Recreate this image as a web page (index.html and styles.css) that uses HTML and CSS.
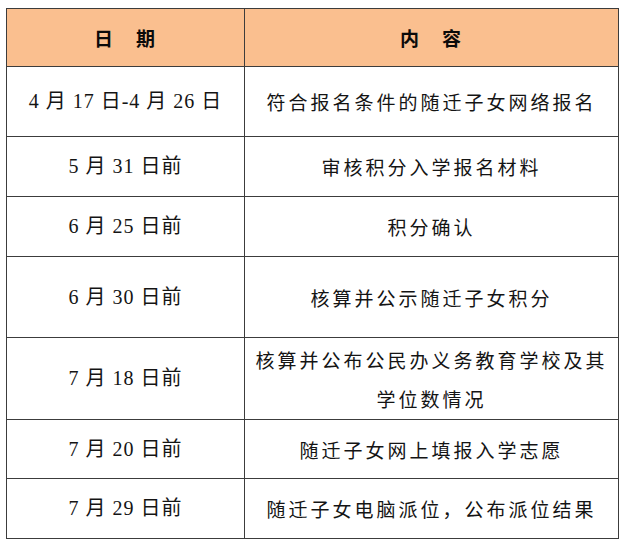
FILE: index.html
```html
<!DOCTYPE html>
<html lang="zh-CN">
<head>
<meta charset="utf-8">
<title>随迁子女入学时间安排</title>
<link rel="stylesheet" href="styles.css">
</head>
<body>
<table class="schedule">
  <colgroup>
    <col class="col-date">
    <col class="col-content">
  </colgroup>
  <thead>
    <tr class="r-head">
      <th>日　期</th>
      <th>内　容</th>
    </tr>
  </thead>
  <tbody>
    <tr class="r1">
      <td class="date">4 月 17 日-4 月 26 日</td>
      <td class="content">符合报名条件的随迁子女网络报名</td>
    </tr>
    <tr class="r2">
      <td class="date">5 月 31 日前</td>
      <td class="content">审核积分入学报名材料</td>
    </tr>
    <tr class="r3">
      <td class="date">6 月 25 日前</td>
      <td class="content">积分确认</td>
    </tr>
    <tr class="r4">
      <td class="date">6 月 30 日前</td>
      <td class="content">核算并公示随迁子女积分</td>
    </tr>
    <tr class="r5">
      <td class="date">7 月 18 日前</td>
      <td class="content">核算并公布公民办义务教育学校及其学位数情况</td>
    </tr>
    <tr class="r6">
      <td class="date">7 月 20 日前</td>
      <td class="content">随迁子女网上填报入学志愿</td>
    </tr>
    <tr class="r7">
      <td class="date">7 月 29 日前</td>
      <td class="content">随迁子女电脑派位，公布派位结果</td>
    </tr>
  </tbody>
</table>
</body>
</html>
```
FILE: styles.css
```css
html, body {
  margin: 0;
  padding: 0;
  background: #ffffff;
}
body {
  padding: 8px 0 0 6px;
}
.schedule {
  border-collapse: collapse;
  table-layout: fixed;
  width: 612px;
  color: #141414;
  font-family: "Noto Sans CJK SC", sans-serif;
  font-size: 19px;
}
.col-date { width: 238px; }
.col-content { width: 374px; }
.schedule th,
.schedule td {
  border: 1px solid #3c3c3c;
  text-align: center;
  vertical-align: middle;
  padding: 0 4px;
  line-height: 39px;
}
.schedule th {
  background: #fabf8f;
  font-weight: bold;
  color: #0a0a0a;
  font-size: 19px;
  letter-spacing: 2px;
}
.date {
  font-family: "Liberation Serif", "Noto Sans CJK SC", serif;
  font-size: 20px;
  letter-spacing: 1px;
}
.content {
  letter-spacing: 3px;
  padding: 0 0 0 8px;
}
.r-head { height: 58px; }
.r1 { height: 70px; }
.r2 { height: 60px; }
.r3 { height: 60px; }
.r4 { height: 81px; }
.r5 { height: 82px; }
.r6 { height: 59px; }
.r7 { height: 60px; }
```
